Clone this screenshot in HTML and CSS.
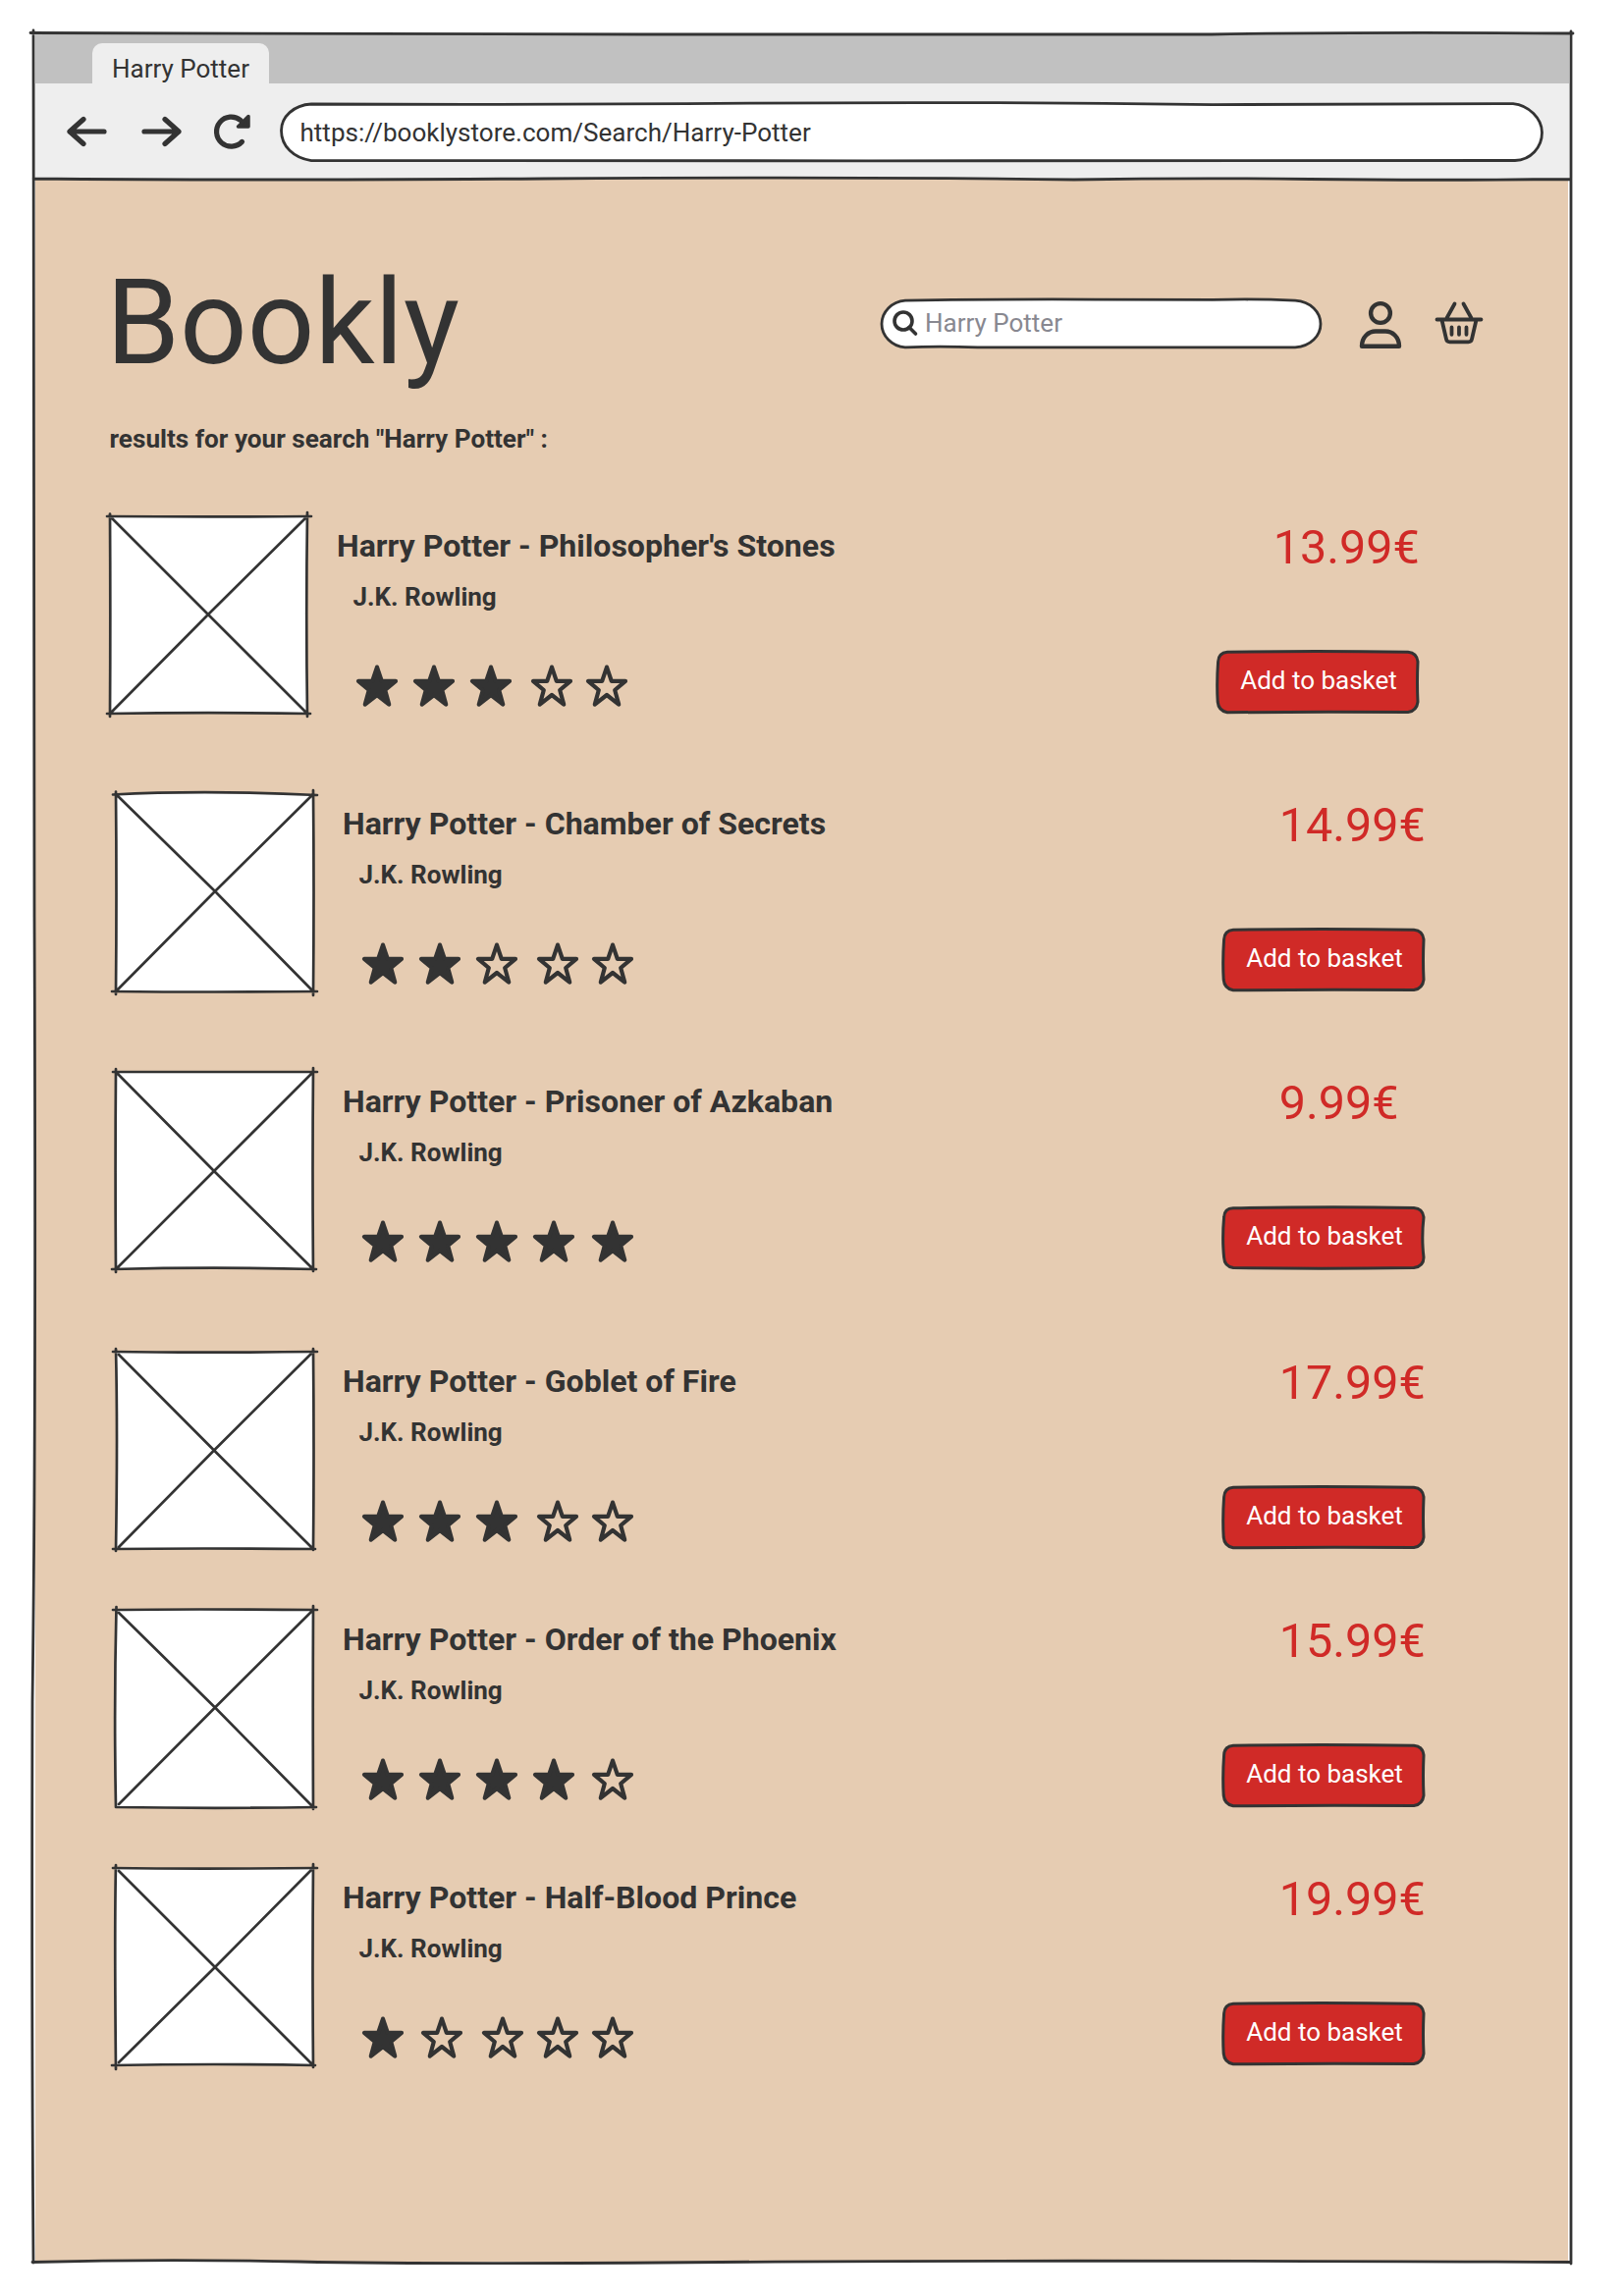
FILE: index.html
```html
<!DOCTYPE html>
<html lang="en">
<head>
<meta charset="utf-8">
<title>Harry Potter</title>
<link rel="stylesheet" href="styles.css">
</head>
<body>
<svg class="defs" aria-hidden="true">
  <symbol id="star" viewBox="0 0 46 46"><path d="M23 3.6 L27.8 17.8 H42 L31.2 27 L35.2 41.6 L23 32 L10.8 41.6 L14.8 27 L4 17.8 H18.2 Z"/></symbol>
  <symbol id="btn-a" viewBox="0 0 208 66"><path d="M12 2.2 Q100 1 196 2.2 Q205 3 206 12 Q205 34 206 53 Q205 62 196 63.6 Q100 63 12 63.8 Q3 62 2.2 53 Q1 34 2.6 12 Q3 3 12 2.2 Z"/></symbol>
  <symbol id="btn-b" viewBox="0 0 208 66"><path d="M12 2.8 Q104 .8 196 2.4 Q205 3 206 12 Q203.6 33 206 53 Q206 62 196 63.6 Q100 64.8 12 63.6 Q3 62 2.6 53 Q.6 34 2.6 12 Q3 3 12 2.8 Z"/></symbol>
</svg>
<div class="browser">
  <div class="tabstrip"><div class="tab">Harry Potter</div></div>
  <div class="toolbar">
    <svg class="nav back" viewBox="0 0 44 44"><path d="M40 22 H5 M19 9.5 L5 22 L19 34.500"/></svg>
    <svg class="nav forward" viewBox="0 0 44 44"><path d="M4 22 H39 M25 9.500 L39 22 L25 34.500"/></svg>
    <svg class="nav reload" viewBox="0 0 44 44"><path d="M31.500 32.400 A15 15 0 1 1 30 10.500"/><path class="solid" d="M38 6.500 V17 H27.500 Z"/></svg>
    <div class="address">
      <svg class="outline" viewBox="0 0 1287 62"><path d="M32 3 Q250 4 480 2.200 T950 3.600 L1256 2.600 C1272 4 1285.500 18 1285.500 32 C1285.500 47 1274 60 1258 60.500 Q900 60 600 60.800 T32 60.600 C14 58 1.500 46 1.500 30 C1.500 16 14 4 32 3 Z"/></svg>
      <span>https://booklystore.com/Search/Harry-Potter</span>
    </div>
  </div>
  <main class="page">
    <header class="header">
      <h1 class="logo">Bookly</h1>
      <div class="search">
        <svg class="outline" viewBox="0 0 452 53"><path d="M26 3 Q120 1.600 220 2 T340 2.400 Q380 1.200 424 3 C440 4 450 15 450 27 C450 39 440 50 424 51 L100 51 Q60 49.400 26 51 C12 50 2 39 2 27 C2 15 12 4 26 3 Z"/></svg>
        <svg class="glass" viewBox="0 0 26 26"><circle cx="11" cy="11" r="9"/><path d="M17 17.500 L23.500 24"/></svg>
        <span>Harry Potter</span>
      </div>
      <svg class="person" viewBox="0 0 46 56"><circle cx="23" cy="18" r="9.900"/><path d="M4 51.800 C4 42 11 36.500 18 36.500 H28 C35 36.500 42 42 42 51.800 Z"/></svg>
      <svg class="basket" viewBox="0 0 54 56"><path d="M3.500 24.500 H48.500 M8.500 25 L13 44.500 Q13.500 47.300 16.500 47.300 H35.500 Q38.500 47.300 39 44.500 L43.500 25 M13.500 23 L21.500 8.500 M38.500 23 L30.500 8.500 M18.500 32.500 V39.800 M26 32.500 V39.800 M33.500 32.500 V39.800"/></svg>
    </header>
    <p class="summary">results for your search "Harry Potter" :</p>

    <section class="results">
      <article class="book first">
        <svg class="cover" viewBox="0 0 201 201"><path class="paper" d="M0 0H201V201H0Z"/><path d="M-3 0 Q100 .8 205 0 M0 -2.500 Q.6 100 0 204 M201 -4 Q199.500 100 201 204 M-3 201 Q100 199.400 204 201 M1 1 L100 100 L201 201 M201 0 L100 100 L0 201"/></svg>
        <div class="info">
          <h2 class="title">Harry Potter - Philosopher's Stones</h2>
          <p class="author">J.K. Rowling</p>
          <div class="stars three"><svg class="on"><use href="#star"/></svg><svg class="on"><use href="#star"/></svg><svg class="on"><use href="#star"/></svg><svg><use href="#star"/></svg><svg><use href="#star"/></svg></div>
        </div>
        <div class="buy"><p class="price">13.99€</p><button class="add"><svg class="outline"><use href="#btn-a"/></svg><span>Add to basket</span></button></div>
      </article>

      <article class="book">
        <svg class="cover" viewBox="0 0 201 201"><path class="paper" d="M0 0Q100 -4 201 0V201H0Z"/><path d="M-3 .5 Q90 -4.500 205 1 M0 -2.500 Q1 100 0 204 M201 -4 Q202 100 201 205 M-4 201 Q100 202 205 201 M1 1 L101 99 L201 201 M201 0 L101 99 L0 201"/></svg>
        <div class="info">
          <h2 class="title">Harry Potter - Chamber of Secrets</h2>
          <p class="author">J.K. Rowling</p>
          <div class="stars three"><svg class="on"><use href="#star"/></svg><svg class="on"><use href="#star"/></svg><svg><use href="#star"/></svg><svg><use href="#star"/></svg><svg><use href="#star"/></svg></div>
        </div>
        <div class="buy"><p class="price">14.99€</p><button class="add"><svg class="outline"><use href="#btn-a"/></svg><span>Add to basket</span></button></div>
      </article>

      <article class="book">
        <svg class="cover" viewBox="0 0 201 201"><path class="paper" d="M0 0H201V201H0Z"/><path d="M-3 0 H205 M0 -3 Q-.8 100 0 204 M201 -4 Q200 100 201 203 M-4 201 Q100 198.400 204 201 M1 1 L100 101 L201 201 M201 0 L100 101 L0 201"/></svg>
        <div class="info">
          <h2 class="title">Harry Potter - Prisoner of Azkaban</h2>
          <p class="author">J.K. Rowling</p>
          <div class="stars five"><svg class="on"><use href="#star"/></svg><svg class="on"><use href="#star"/></svg><svg class="on"><use href="#star"/></svg><svg class="on"><use href="#star"/></svg><svg class="on"><use href="#star"/></svg></div>
        </div>
        <div class="buy"><p class="price">9.99€</p><button class="add"><svg class="outline"><use href="#btn-b"/></svg><span>Add to basket</span></button></div>
      </article>

      <article class="book goblet">
        <svg class="cover" viewBox="0 0 201 201"><path class="paper" d="M0 0H201V201H0Z"/><path d="M-3 0 Q80 1.400 205 0 M0 -3 Q2 80 0 203 M201 -3 Q202 100 201 202 M-3 201 Q80 200 203 201 M3 3 L100 100.500 L201 201 M201 0 L100 100.500 L3 199"/></svg>
        <div class="info">
          <h2 class="title">Harry Potter - Goblet of Fire</h2>
          <p class="author">J.K. Rowling</p>
          <div class="stars three"><svg class="on"><use href="#star"/></svg><svg class="on"><use href="#star"/></svg><svg class="on"><use href="#star"/></svg><svg><use href="#star"/></svg><svg><use href="#star"/></svg></div>
        </div>
        <div class="buy"><p class="price">17.99€</p><button class="add"><svg class="outline"><use href="#btn-a"/></svg><span>Add to basket</span></button></div>
      </article>

      <article class="book close">
        <svg class="cover" viewBox="0 0 201 201"><path class="paper" d="M0 0H201V201H0Z"/><path d="M-3 0 Q70 -1 205 0 M.5 -3 Q-2 100 0 201 M201 -4 Q200.500 100 201 203 M0 201 Q100 202.600 204 201 M3 3 L101 99.500 L201 201 M201 0 L101 99.500 L3 198"/></svg>
        <div class="info">
          <h2 class="title">Harry Potter - Order of the Phoenix</h2>
          <p class="author">J.K. Rowling</p>
          <div class="stars five"><svg class="on"><use href="#star"/></svg><svg class="on"><use href="#star"/></svg><svg class="on"><use href="#star"/></svg><svg class="on"><use href="#star"/></svg><svg><use href="#star"/></svg></div>
        </div>
        <div class="buy"><p class="price">15.99€</p><button class="add"><svg class="outline"><use href="#btn-a"/></svg><span>Add to basket</span></button></div>
      </article>

      <article class="book close">
        <svg class="cover" viewBox="0 0 201 201"><path class="paper" d="M0 0H201V201H0Z"/><path d="M-3 0 Q80 1.200 205 0 M0 -3 Q-1.500 60 0 205 M201 -4 Q200 100 201 203 M-4 201 Q100 199 203 201 M3 3 L101 101 L201 201 M201 0 L101 101 L3 198"/></svg>
        <div class="info">
          <h2 class="title">Harry Potter - Half-Blood Prince</h2>
          <p class="author">J.K. Rowling</p>
          <div class="stars one"><svg class="on"><use href="#star"/></svg><svg><use href="#star"/></svg><svg><use href="#star"/></svg><svg><use href="#star"/></svg><svg><use href="#star"/></svg></div>
        </div>
        <div class="buy"><p class="price">19.99€</p><button class="add"><svg class="outline"><use href="#btn-a"/></svg><span>Add to basket</span></button></div>
      </article>
    </section>
  </main>
  <svg class="frame" viewBox="0 0 1566 2270"><path d="M-3 -.5 Q300 1.500 620 1 T1200 1 Q1350 -1.500 1568 0 M0 -3 Q-1 400 1 900 T-1 1700 Q-2 2000 0 2271 M1566 -2 Q1564.500 500 1566 1000 T1566 1700 Q1567 2000 1566 2272 M-1 2270.500 Q130 2267 270 2270 T700 2270.500 T1566 2270.500 M0 148 Q200 150 520 148 T1060 149 Q1180 147 1300 148.500 T1566 148.500"/></svg>
</div>
</body>
</html>
```

FILE: styles.css
```css
* { box-sizing: border-box; }
html, body { margin: 0; background: #fff; }
body {
  height: 2339px;
  padding: 34px;
  font-family: Roboto, "Liberation Sans", sans-serif;
  font-size: 26px;
  color: #333;
}
h1, h2, p { margin: 0; }
svg { display: block; flex: none; overflow: visible; fill: none; stroke: #333; stroke-linecap: round; stroke-linejoin: round; }
.defs { position: absolute; width: 0; height: 0; }

.browser { position: relative; width: 1566px; height: 2270px; display: flex; flex-direction: column; }
.frame { position: absolute; inset: 0; width: 100%; height: 100%; stroke-width: 2.8; pointer-events: none; }

.tabstrip { height: 51px; margin: 0 2px; padding: 10px 0 0 58px; background: #c1c1c1; }
.tab { width: 180px; height: 41px; padding-left: 20px; line-height: 53px; border-radius: 10px 10px 0 0; background: #eee; white-space: nowrap; }
.toolbar { height: 97px; margin: 0 2px 0 1px; padding-left: 31px; display: flex; align-items: center; background: #eee; }
.nav { width: 44px; height: 44px; stroke-width: 5.2; }
.forward { margin-left: 32.5px; }
.reload { margin: 0 26px 0 28px; }
.solid { fill: #333; stroke-width: 3.5; }
.address { position: relative; width: 1287px; height: 62px; padding-left: 21px; font-size: 26.05px; line-height: 65px; }
.outline { position: absolute; inset: 0; width: 100%; height: 100%; fill: #fff; stroke-width: 2.8; }
.address span, .search span, .add span { position: relative; }

.page { flex: 1; margin: 0 3px 0 2px; padding: 77px 0 0; background: #e6ccb2; }
.header { height: 140px; display: flex; align-items: center; padding-left: 72px; }
.logo { width: 788px; font-size: 120.5px; line-height: 140px; font-weight: 400; }
.search { position: relative; width: 451px; height: 53px; padding-left: 13px; display: flex; align-items: center; color: #888890; }
.glass { position: relative; width: 26px; height: 26px; margin-right: 7px; stroke-width: 3.6; }
.person { width: 46px; height: 56px; margin-left: 35.5px; stroke-width: 4.4; }
.basket { width: 54px; height: 56px; margin-left: 31px; stroke-width: 3.8; }
.summary { margin: 28px 0 0 75.5px; font-size: 26.15px; line-height: 40px; font-weight: 700; }

.results { padding: 59px 0 0 82px; }
.book { display: grid; grid-template-columns: 201px 1fr 208px; width: 1334px; height: 201px; margin-top: 82px; }
.first { margin: 0 0 0 -6px; }
.goblet { margin-top: 84px; }
.close { margin-top: 62px; }
.cover { width: 201px; height: 201px; stroke-width: 2.7; }
.paper { fill: #fff; stroke: none; }
.info { padding: 10px 0 0 30px; }
.title { font-size: 32.1px; line-height: 40px; font-weight: 700; white-space: nowrap; }
.author { margin: 12px 0 0 16.5px; line-height: 40px; font-weight: 700; }
.stars { display: grid; margin: 48.2px 0 0 17.5px; }
.stars svg { width: 46px; height: 46px; stroke-width: 4.2; }
.stars .on { fill: #333; }
.three { grid-template-columns: 58.2px 58.2px 62.2px 56.3px 46px; }
.five { grid-template-columns: 58.2px 58.2px 58.2px 60.1px 46px; }
.one { grid-template-columns: 60.2px 62.4px 56px 56.2px 46px; }

.buy { padding-top: 3.5px; }
.price { padding-left: 58.8px; font-size: 48.5px; line-height: 56px; color: #d02a27; white-space: nowrap; }
.add { position: relative; display: block; width: 208px; height: 66px; margin-top: 76px; padding: 0; border: 0; background: none; font: inherit; line-height: 62.6px; color: #fff; text-align: center; }
.add .outline { fill: #d02a27; stroke-width: 3; }
.add span { display: block; height: 66px; left: 1px; }
```
